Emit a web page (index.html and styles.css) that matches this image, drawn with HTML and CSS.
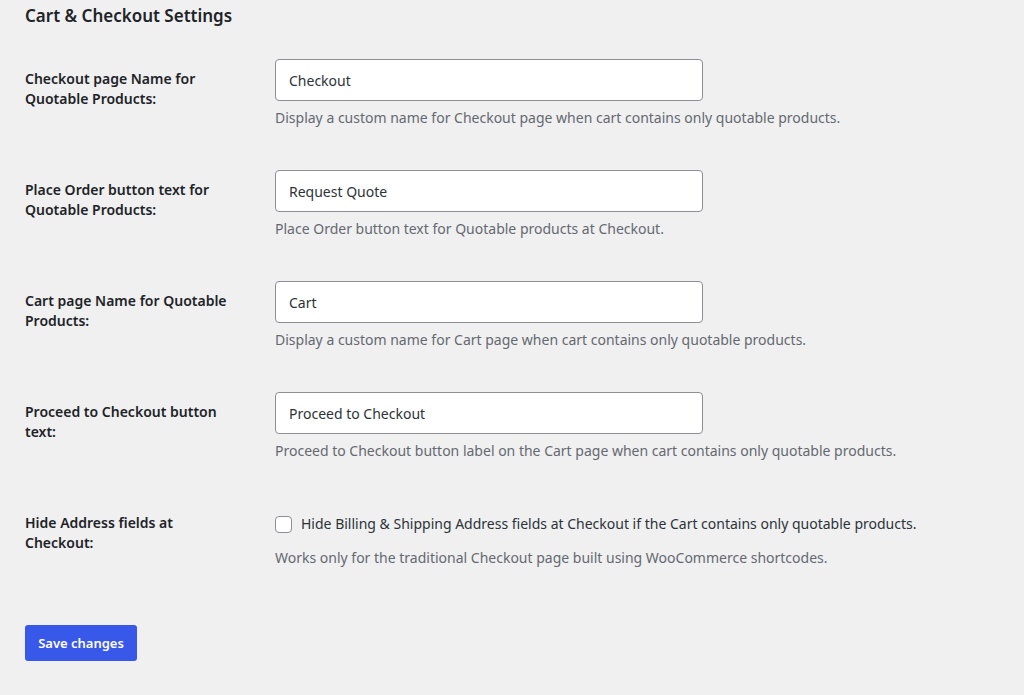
FILE: index.html
```html
<!DOCTYPE html>
<html lang="en">
<head>
    <meta charset="UTF-8">
    <meta name="viewport" content="width=device-width, initial-scale=1.0">
    <title>Cart &amp; Checkout Settings</title>
    <link rel="stylesheet" href="styles.css">
</head>
<body>
<main class="wrap">
	<h2 class="section-title">Cart &amp; Checkout Settings</h2>
	<form class="settings">
		<div class="row">
			<label class="row-label" for="checkout_name">Checkout page Name for Quotable Products:</label>
			<div class="row-field">
				<input type="text" id="checkout_name" class="regular-text" value="Checkout">
				<p class="description">Display a custom name for Checkout page when cart contains only quotable products.</p>
			</div>
		</div>
		<div class="row">
			<label class="row-label" for="order_btn">Place Order button text for Quotable Products:</label>
			<div class="row-field">
				<input type="text" id="order_btn" class="regular-text" value="Request Quote">
				<p class="description">Place Order button text for Quotable products at Checkout.</p>
			</div>
		</div>
		<div class="row">
			<label class="row-label" for="cart_name">Cart page Name for Quotable Products:</label>
			<div class="row-field">
				<input type="text" id="cart_name" class="regular-text" value="Cart">
				<p class="description">Display a custom name for Cart page when cart contains only quotable products.</p>
			</div>
		</div>
		<div class="row">
			<label class="row-label" for="proceed_btn">Proceed to Checkout button text:</label>
			<div class="row-field">
				<input type="text" id="proceed_btn" class="regular-text" value="Proceed to Checkout">
				<p class="description">Proceed to Checkout button label on the Cart page when cart contains only quotable products.</p>
			</div>
		</div>
		<div class="row">
			<div class="row-label">Hide Address fields at Checkout:</div>
			<div class="row-field">
				<label class="check"><input type="checkbox"><span class="box"></span>Hide Billing &amp; Shipping Address fields at Checkout if the Cart contains only quotable products.</label>
				<p class="description desc-check">Works only for the traditional Checkout page built using WooCommerce shortcodes.</p>
			</div>
		</div>
		<p class="submit"><button type="button" class="button-primary">Save changes</button></p>
	</form>
</main>
</body>
</html>
```

FILE: styles.css
```css
* { margin: 0; padding: 0; box-sizing: border-box; }
body { background: #f0f0f1; color: #1d2327; font-family: "Noto Sans", "Open Sans", sans-serif; font-size: 14px; line-height: 20px; }
.wrap { padding: 0 25px; }
.section-title { font-size: 17px; font-weight: 600; line-height: 26px; padding-top: 3px; margin-bottom: 30px; }
.row { display: grid; grid-template-columns: 250px 1fr; margin-bottom: 42px; }
.row-label { font-weight: 600; padding-top: 10px; padding-right: 30px; }
.regular-text { display: block; width: 428px; height: 42px; padding: 0 13px; border: 1px solid #8c8f94; border-radius: 4px; background: #fff; color: #2c3338; font: inherit; }
.description { color: #646970; margin-top: 7px; }
.check { display: flex; align-items: center; gap: 9px; color: #2c3338; margin-top: 11px; }
.check input { display: none; }
.box { width: 17px; height: 17px; border: 1px solid #8c8f94; border-radius: 4px; background: #fff; }
.desc-check { margin-top: 14px; }
.submit { margin-top: 57px; }
.button-primary { height: 36px; width: 112px; border: 0; border-radius: 3px; background: #3858e9; color: #fff; font: inherit; font-weight: 600; font-size: 13px; }
```
